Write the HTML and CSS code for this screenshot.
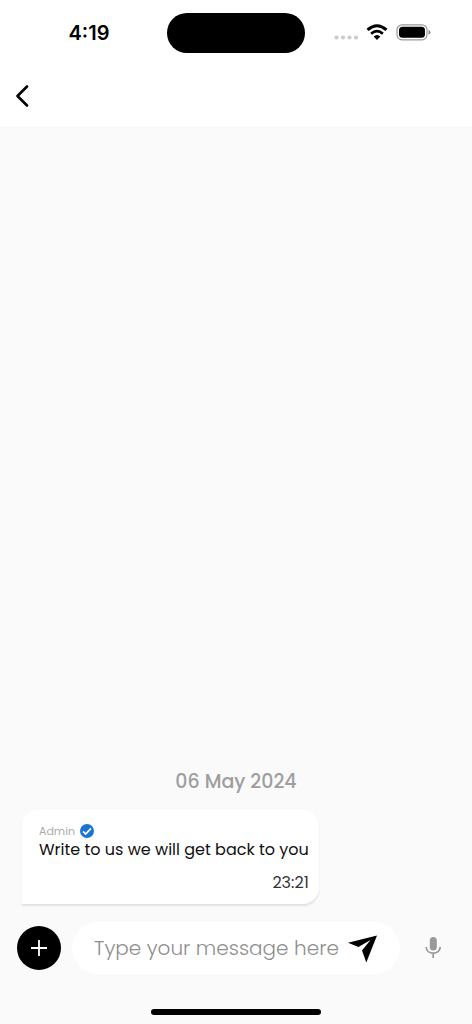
FILE: index.html
```html
<!DOCTYPE html>
<html lang="en">
<head>
	<meta charset="UTF-8">
	<meta name="viewport" content="width=device-width, initial-scale=1.0">
	<title>Support Chat</title>
	<link rel="stylesheet" href="styles.css">
</head>
<body>

	<!-- Top area -->
	<header class="header">
		<div class="status-bar">
			<div class="status-time">4:19</div>
			<div class="island"></div>
			<div class="status-icons">
				<svg class="dots" width="24" height="18" viewBox="0 0 24 18" fill="#cccccc">
					<circle cx="2.500" cy="13.500" r="2.100"/>
					<circle cx="9" cy="13.500" r="2.100"/>
					<circle cx="15.500" cy="13.500" r="2.100"/>
					<circle cx="22" cy="13.500" r="2.100"/>
				</svg>
				<svg class="wifi" width="22" height="18" viewBox="0 0 22 18">
					<path d="M1.500 5.800Q11 -2.400 20.500 5.800" fill="none" stroke="#000" stroke-width="3"/>
					<path d="M5.100 9.700Q11 4.500 16.900 9.700" fill="none" stroke="#000" stroke-width="2.800"/>
					<path d="M11 16L7.600 12.500Q11 9.500 14.400 12.500Z" fill="#000"/>
				</svg>
				<svg class="battery" width="35" height="18" viewBox="0 0 35 18">
					<rect x="1" y="0.800" width="30" height="15" rx="5" fill="none" stroke="#999" stroke-width="1.200"/>
					<rect x="3" y="2.800" width="26" height="11" rx="3.500" fill="#000"/>
					<path d="M32.500 5.800Q34.500 6.800 34.500 8.300Q34.500 9.800 32.500 10.800Z" fill="#888"/>
				</svg>
			</div>
		</div>
		<div class="nav">
			<button class="back-btn" type="button" aria-label="Back">
				<svg width="14" height="22" viewBox="0 0 14 22" fill="none" stroke="#000" stroke-width="2.600" stroke-linecap="round" stroke-linejoin="round">
					<path d="M12 1.500L2.500 11L12 20.500"/>
				</svg>
			</button>
		</div>
	</header>

	<!-- Messages -->
	<main class="messages">
		<div class="date">06 May 2024</div>
		<div class="message">
			<div class="sender">
				<span>Admin</span>
				<svg width="14" height="14" viewBox="0 0 14 14">
					<circle cx="7" cy="7" r="7" fill="#1976d2"/>
					<path d="M3 7.400L5.700 10L11 4.300" fill="none" stroke="#fff" stroke-width="1.700"/>
				</svg>
			</div>
			<p class="text">Write to us we will get back to you</p>
			<div class="time">23:21</div>
		</div>
	</main>

	<!-- Message form -->
	<form class="composer">
		<button class="add-btn" type="button" aria-label="Add attachment">
			<svg width="16" height="16" viewBox="0 0 16 16" stroke="#fff" stroke-width="1.800">
				<path d="M8 0V16M0 8H16"/>
			</svg>
		</button>
		<div class="field">
			<input class="message-input" type="text" placeholder="Type your message here" aria-label="Message">
			<button class="send-btn" type="button" aria-label="Send">
				<svg width="29" height="30" viewBox="0 0 29 30">
					<path d="M29 2.500L0 9.700L10.500 14L22.500 7L14 17.500L18.300 29.500Z" fill="#000"/>
				</svg>
			</button>
		</div>
		<button class="mic-btn" type="button" aria-label="Record voice message">
			<svg width="16" height="22" viewBox="0 0 16 22">
				<rect x="4.800" y="0" width="7" height="13.500" rx="3.500" fill="#999"/>
				<path d="M1.200 10C1.200 18.200 15.200 18.200 15.200 10M8.200 16V21" fill="none" stroke="#999" stroke-width="1.700"/>
			</svg>
		</button>
	</form>

	<div class="home-indicator"></div>

</body>
</html>
```
FILE: styles.css
```css
* {
	box-sizing: border-box;
}

body {
	margin: 0;
	min-height: 100vh;
	display: flex;
	flex-direction: column;
	background-color: #fafafa;
	font-family: Poppins, Inter, sans-serif;
	color: #111;
}

button {
	display: flex;
	align-items: center;
	justify-content: center;
	padding: 0;
	border: none;
	background-color: transparent;
	cursor: pointer;
}

svg {
	display: block;
	flex-shrink: 0;
}

/* Top area */
.header {
	background-color: #fff;
}

.status-bar {
	display: grid;
	grid-template-columns: 1fr 138px 1fr;
	align-items: center;
	padding-top: 13px;
}

.status-time {
	padding-left: 11px;
	text-align: center;
	font-family: Inter, sans-serif;
	font-size: 20px;
	font-weight: 600;
	line-height: 24px;
	color: #000;
}

.island {
	height: 40px;
	border-radius: 20px;
	background-color: #000;
}

.status-icons {
	display: flex;
	align-items: center;
	justify-content: flex-end;
	gap: 8px;
	padding-right: 41px;
}

.nav {
	display: flex;
	align-items: center;
	height: 73px;
	padding: 12px 15px 0;
}

.back-btn {
	height: 44px;
}

/* Messages */
.messages {
	flex: 1;
	display: flex;
	flex-direction: column;
	justify-content: flex-end;
	align-items: flex-start;
	padding: 0 22px 18px;
}

.date {
	align-self: center;
	margin-bottom: 14px;
	font-size: 19px;
	font-weight: 500;
	line-height: 28px;
	color: #9e9e9e;
}

.message {
	padding: 14px 10px 9px 17px;
	border-radius: 16px 16px 16px 0;
	background-color: #fff;
	box-shadow: 0 2px 2px rgba(0, 0, 0, 0.1);
}

.sender {
	display: flex;
	align-items: center;
	gap: 5px;
	font-size: 11px;
	line-height: 14px;
	color: #aaa;
}

.text {
	margin: 0;
	font-size: 16px;
	line-height: 24px;
}

.time {
	margin-top: 9px;
	text-align: right;
	font-size: 16px;
	line-height: 24px;
	color: #333;
}

/* Message form */
.composer {
	display: flex;
	align-items: center;
	padding: 0 23px 0 17px;
}

.add-btn {
	flex-shrink: 0;
	width: 44px;
	height: 44px;
	margin-right: 11px;
	border-radius: 50%;
	background-color: #000;
}

.field {
	flex: 1;
	min-width: 0;
	display: flex;
	align-items: center;
	gap: 8px;
	height: 52px;
	padding: 0 23px 0 22px;
	border-radius: 26px;
	background-color: #fff;
}

.message-input {
	flex: 1;
	min-width: 0;
	padding: 0;
	border: none;
	outline: none;
	background-color: transparent;
	font-family: inherit;
	font-size: 20px;
	font-weight: 300;
	line-height: 28px;
	color: #111;
}

.message-input::placeholder {
	color: #8e8e8e;
	opacity: 1;
}

.mic-btn {
	width: 32px;
	height: 44px;
	margin-left: 17px;
}

.home-indicator {
	width: 36%;
	height: 6px;
	margin: 35px auto 9px;
	border-radius: 3px;
	background-color: #000;
}
```
